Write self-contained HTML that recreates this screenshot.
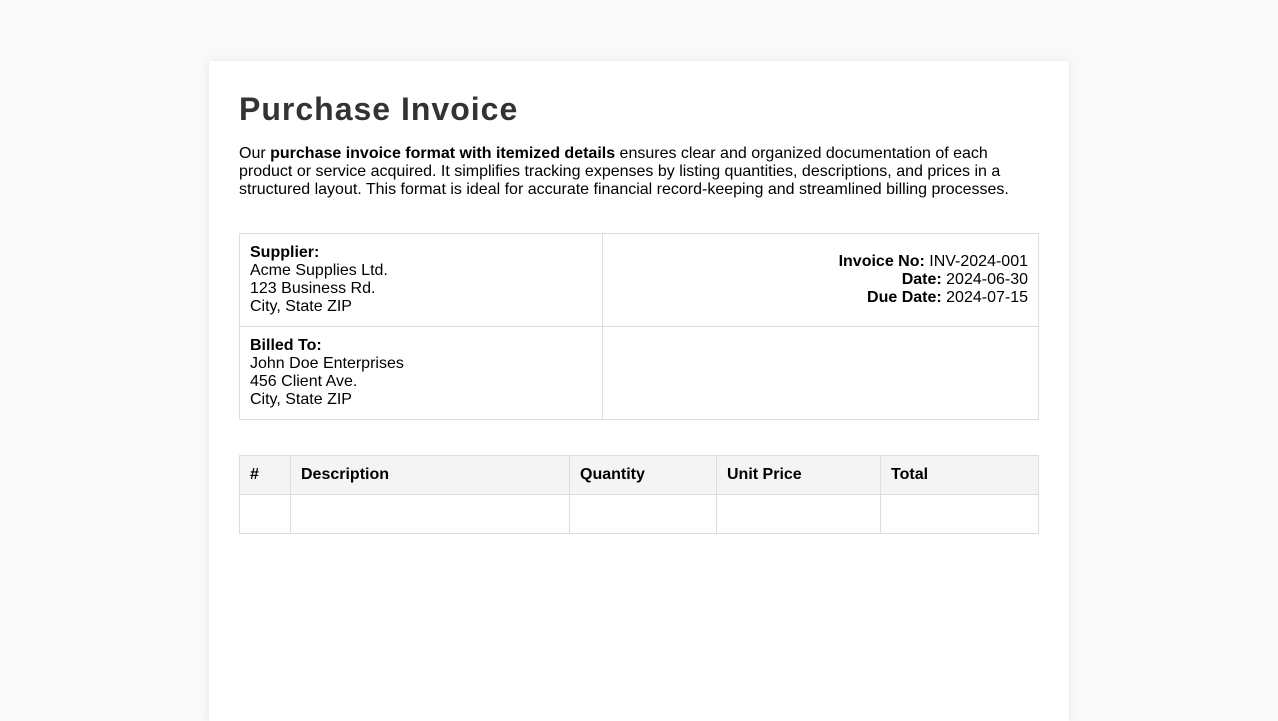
<!DOCTYPE html>
<html><head><meta charset="utf-8"><style>
html,body{margin:0;padding:0}
body{background:#f9f9f9;font-family:"Liberation Sans",Arial,sans-serif;font-size:16px;color:#000;width:1278px;height:501px;overflow:hidden}
.card{position:absolute;left:209px;top:61px;width:800px;padding:30px;background:#fff;box-shadow:0 0 8px rgba(0,0,0,0.08);height:600px}
h1{margin:0;font-size:32px;line-height:37px;color:#333;letter-spacing:1px;font-weight:bold}
p{margin:17px 0 0;line-height:18px}
table{border-collapse:collapse;width:800px;margin-top:34px}
td,th{border:1px solid #ddd;padding:10px;line-height:18px;vertical-align:top;text-align:left}
.r{text-align:right;vertical-align:middle}
th{background:#f4f4f4}
</style></head><body>
<div class="card">
<h1>Purchase Invoice</h1>
<p>Our <b>purchase invoice format with itemized details</b> ensures clear and organized documentation of each product or service acquired. It simplifies tracking expenses by listing quantities, descriptions, and prices in a structured layout. This format is ideal for accurate financial record-keeping and streamlined billing processes.</p>
<table>
<tr><td style="width:342px"><b>Supplier:</b><br>Acme Supplies Ltd.<br>123 Business Rd.<br>City, State ZIP</td>
<td class="r"><b>Invoice No:</b> INV-2024-001<br><b>Date:</b> 2024-06-30<br><b>Due Date:</b> 2024-07-15</td></tr>
<tr><td><b>Billed To:</b><br>John Doe Enterprises<br>456 Client Ave.<br>City, State ZIP</td><td></td></tr>
</table>
<table style="margin-top:35px">
<tr><th style="width:30px">#</th><th style="width:258px">Description</th><th style="width:126px">Quantity</th><th style="width:143px">Unit Price</th><th>Total</th></tr>
<tr><td>&nbsp;</td><td></td><td></td><td></td><td></td></tr>
</table>
</div>
</body></html>
